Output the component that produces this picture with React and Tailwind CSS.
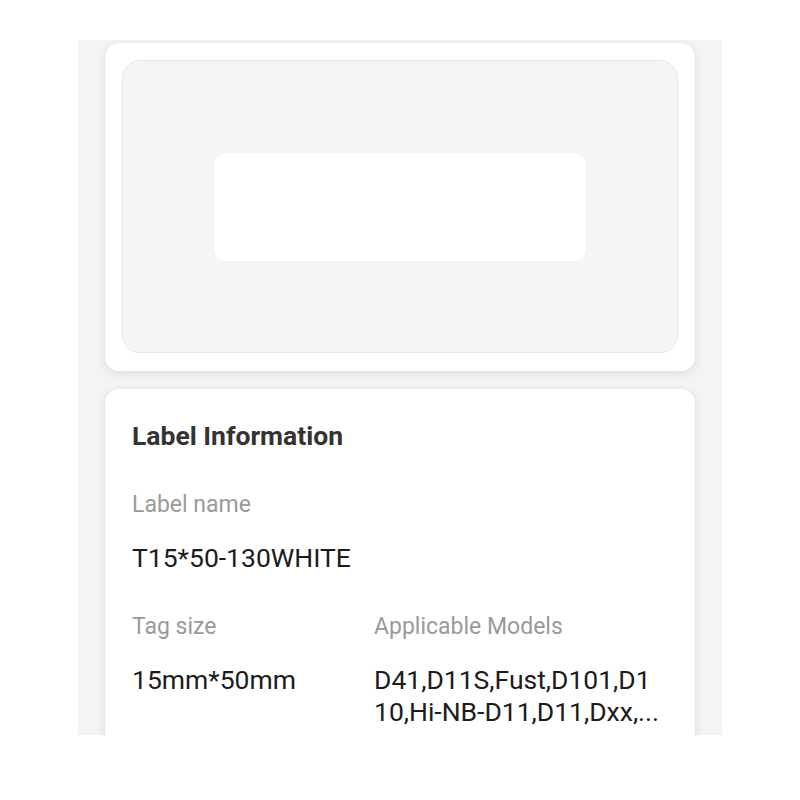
import React from 'react';

const info = {
  name: 'T15*50-130WHITE',
  size: '15mm*50mm',
  models: 'D41,D11S,Fust,D101,D110,Hi-NB-D11,D11,Dxx,...',
};

const Field = ({ label, value, className = '' }) => (
  <div className={className}>
    <p className="text-[23px] leading-[30px] text-[#9a9a9a]">{label}</p>
    <p className="mt-[22px] text-[26.5px] leading-[32px] text-[#1c1c1c] break-all line-clamp-2">
      {value}
    </p>
  </div>
);

const App = () => {
  return (
    <div
      className="w-[800px] h-[800px] bg-white pt-[40px]"
      style={{ fontFamily: 'Roboto, "Noto Sans", sans-serif' }}
    >
      <div className="ml-[78px] w-[644px] h-[695px] bg-[#f4f4f4] overflow-hidden px-[27px] pt-[3px]">
        {/* preview card */}
        <div className="h-[328px] rounded-[14px] bg-white shadow-[0_2px_10px_rgba(0,0,0,0.12)] p-[17px] pb-[18px]">
          <div className="h-full rounded-[18px] bg-[#f5f5f5] border border-[#e6e6e6] flex items-center justify-center">
            <div className="w-[372px] h-[108px] rounded-[12px] bg-white shadow-[0_0_3px_rgba(0,0,0,0.04)]" />
          </div>
        </div>

        {/* info card */}
        <div className="mt-[18px] rounded-[14px] bg-white shadow-[0_2px_10px_rgba(0,0,0,0.12)] pl-[27px] pr-[30px] pt-[31px] pb-[40px]">
          <h2 className="text-[26.5px] leading-[32px] font-bold text-[#333333]">Label Information</h2>
          <Field label="Label name" value={info.name} className="mt-[38px]" />
          <div className="mt-[38px] grid grid-cols-[242px_1fr]">
            <Field label="Tag size" value={info.size} />
            <Field label="Applicable Models" value={info.models} />
          </div>
        </div>
      </div>
    </div>
  );
};

export default App;
